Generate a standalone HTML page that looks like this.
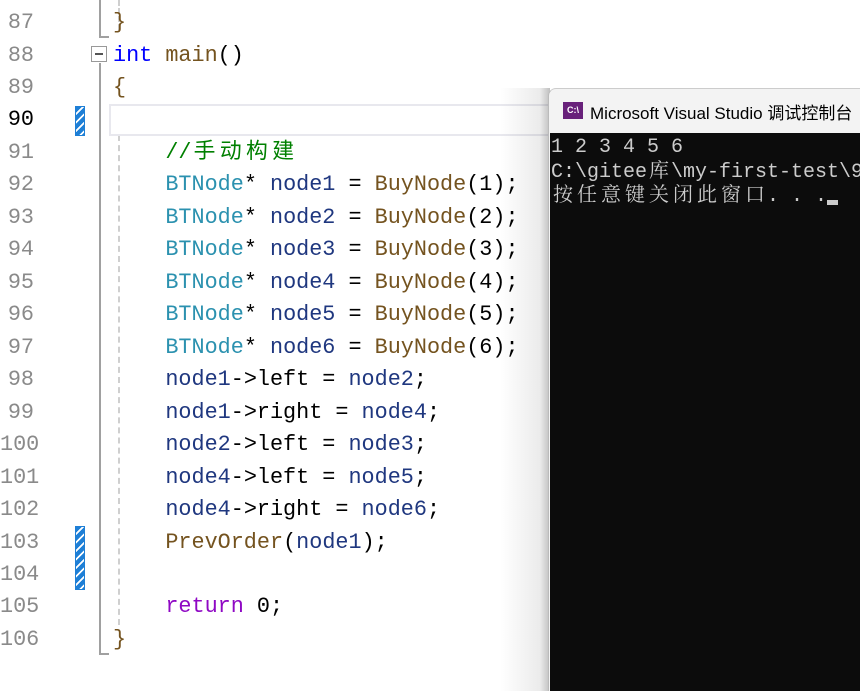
<!DOCTYPE html>
<html><head><meta charset="utf-8">
<style>
*{margin:0;padding:0;box-sizing:border-box}
body{width:860px;height:691px;overflow:hidden;background:#fff;position:relative;font-family:"Liberation Mono","Noto Sans CJK SC",monospace}
.ln{position:absolute;left:0;width:34px;text-align:right;font-size:21.8px;color:#8a8a8a;height:32.47px;line-height:32.47px}
.code{position:absolute;left:113px;font-size:21.8px;white-space:pre;height:32.47px;line-height:32.47px;color:#000}
.t{color:#2b91af}.k{color:#0000ff}.f{color:#74531f}.v{color:#1f377f}.c{color:#008000}.r{color:#8f08c4}
.chg{position:absolute;left:75px;width:10px;background:repeating-linear-gradient(135deg,#1e7fd6 0 4px,#fff 4px 6px);border:1px solid #1e7fd6}
.w{display:inline-block;width:26.2px;text-align:center}
.cw{display:inline-block;width:24px;text-align:center}
</style></head><body>
<div style="position:absolute;left:99px;top:0;width:2px;height:38px;background:#a0a0a0"></div>
<div style="position:absolute;left:99px;top:36px;width:10px;height:2px;background:#a0a0a0"></div>
<div style="position:absolute;left:91px;top:46px;width:16px;height:16px;border:1.5px solid #999;background:#fff"></div>
<div style="position:absolute;left:95px;top:53px;width:8px;height:2px;background:#555"></div>
<div style="position:absolute;left:99px;top:63px;width:2px;height:591px;background:#a0a0a0"></div>
<div style="position:absolute;left:99px;top:653px;width:10px;height:2px;background:#a0a0a0"></div>
<div style="position:absolute;left:118px;top:0;width:0;height:30px;border-left:2px dashed #cfcfcf"></div>
<div style="position:absolute;left:118px;top:135px;width:0;height:490px;border-left:2px dashed #cfcfcf"></div>
<div style="position:absolute;left:109px;top:104px;width:460px;height:32px;border:2px solid #e8e8ee;border-right:none"></div>
<div class="chg" style="top:106px;height:30px"></div>
<div class="chg" style="top:526px;height:64px"></div>

<div style="position:absolute;left:0;top:2px;width:100%">
<div class="ln" style="top:-27px">86</div>
<div class="ln" style="top:5px">87</div>
<div class="ln" style="top:37.5px">88</div>
<div class="ln" style="top:70px">89</div>
<div class="ln" style="top:102.4px;color:#000">90</div>
<div class="ln" style="top:134.9px">91</div>
<div class="ln" style="top:167.4px">92</div>
<div class="ln" style="top:199.8px">93</div>
<div class="ln" style="top:232.3px">94</div>
<div class="ln" style="top:264.8px">95</div>
<div class="ln" style="top:297.2px">96</div>
<div class="ln" style="top:329.7px">97</div>
<div class="ln" style="top:362.2px">98</div>
<div class="ln" style="top:394.6px">99</div>
<div class="ln" style="top:427.1px">100</div>
<div class="ln" style="top:459.6px">101</div>
<div class="ln" style="top:492px">102</div>
<div class="ln" style="top:524.5px">103</div>
<div class="ln" style="top:557px">104</div>
<div class="ln" style="top:589.4px">105</div>
<div class="ln" style="top:621.9px">106</div>

<div class="code f" style="top:5px">}</div>
<div class="code" style="top:37.5px"><span class="k">int</span> <span class="f">main</span>()</div>
<div class="code f" style="top:70px">{</div>
<div class="code c" style="top:134.9px">    //<span class="w">手</span><span class="w">动</span><span class="w">构</span><span class="w">建</span></div>
<div class="code" style="top:167.4px">    <span class="t">BTNode</span>* <span class="v">node1</span> = <span class="f">BuyNode</span>(1);</div>
<div class="code" style="top:199.8px">    <span class="t">BTNode</span>* <span class="v">node2</span> = <span class="f">BuyNode</span>(2);</div>
<div class="code" style="top:232.3px">    <span class="t">BTNode</span>* <span class="v">node3</span> = <span class="f">BuyNode</span>(3);</div>
<div class="code" style="top:264.8px">    <span class="t">BTNode</span>* <span class="v">node4</span> = <span class="f">BuyNode</span>(4);</div>
<div class="code" style="top:297.2px">    <span class="t">BTNode</span>* <span class="v">node5</span> = <span class="f">BuyNode</span>(5);</div>
<div class="code" style="top:329.7px">    <span class="t">BTNode</span>* <span class="v">node6</span> = <span class="f">BuyNode</span>(6);</div>
<div class="code" style="top:362.2px">    <span class="v">node1</span>-&gt;left = <span class="v">node2</span>;</div>
<div class="code" style="top:394.6px">    <span class="v">node1</span>-&gt;right = <span class="v">node4</span>;</div>
<div class="code" style="top:427.1px">    <span class="v">node2</span>-&gt;left = <span class="v">node3</span>;</div>
<div class="code" style="top:459.6px">    <span class="v">node4</span>-&gt;left = <span class="v">node5</span>;</div>
<div class="code" style="top:492px">    <span class="v">node4</span>-&gt;right = <span class="v">node6</span>;</div>
<div class="code" style="top:524.5px">    <span class="f">PrevOrder</span>(<span class="v">node1</span>);</div>
<div class="code" style="top:589.4px">    <span class="r">return</span> 0;</div>
<div class="code f" style="top:621.9px">}</div>
</div>

<div style="position:absolute;left:500px;top:88px;width:50px;height:603px;background:linear-gradient(90deg,rgba(0,0,0,0),rgba(0,0,0,0.08) 80%,rgba(0,0,0,0.25))"></div>
<div style="position:absolute;left:548px;top:88px;width:312px;height:603px;background:#f3f3f3;border-top-left-radius:8px;border-left:1px solid #bbb;border-top:1px solid #ccc"></div>
<div style="position:absolute;left:563px;top:102px;width:20px;height:17px;background:#68217a;color:#fff;font:bold 9px 'Liberation Sans',sans-serif;line-height:17px;text-align:center">C:\</div>
<div style="position:absolute;left:590px;top:99px;font:17px 'Liberation Sans','Noto Sans CJK SC',sans-serif;color:#000;white-space:nowrap">Microsoft Visual Studio 调试控制台</div>
<div style="position:absolute;left:550px;top:133px;width:310px;height:558px;background:#0c0c0c"></div>
<div style="position:absolute;left:551px;top:136px;font-size:20px;line-height:24.5px;color:#cccccc;white-space:pre;font-family:'Liberation Mono','Noto Serif CJK SC',monospace">1 2 3 4 5 6
C:\gitee<span class="cw">库</span>\my-first-test\9
<span class="cw">按</span><span class="cw">任</span><span class="cw">意</span><span class="cw">键</span><span class="cw">关</span><span class="cw">闭</span><span class="cw">此</span><span class="cw">窗</span><span class="cw">口</span>. . .</div>
<div style="position:absolute;left:827px;top:200px;width:11px;height:5px;background:#ccc"></div>
</body></html>
